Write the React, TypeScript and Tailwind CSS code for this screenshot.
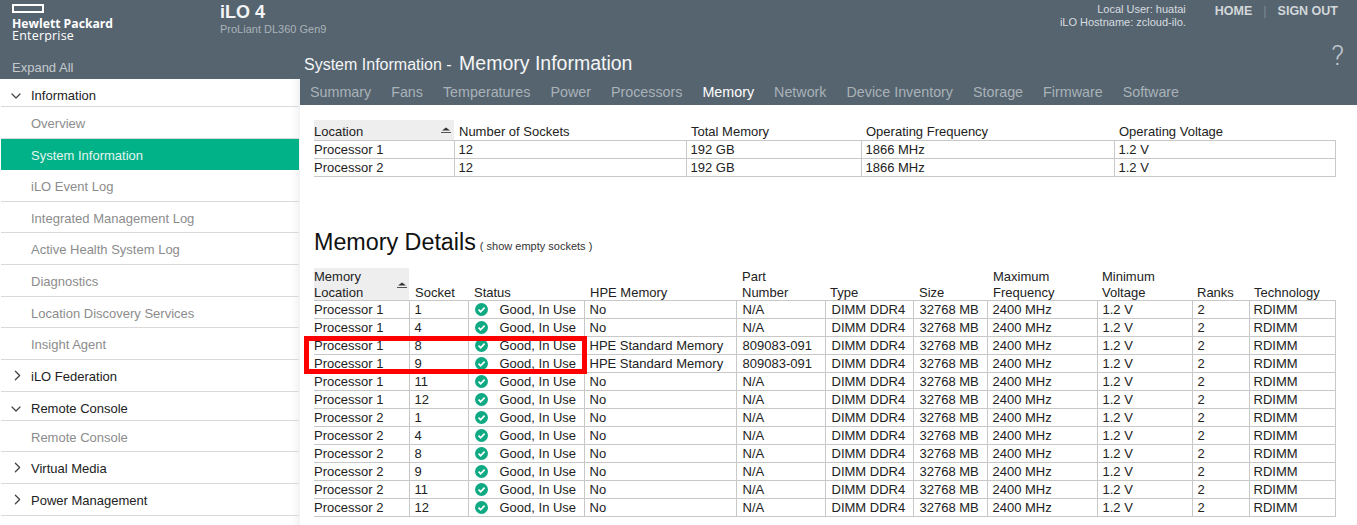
import { ChevronDown, ChevronRight } from 'lucide-react';

const TABS = ['Summary', 'Fans', 'Temperatures', 'Power', 'Processors', 'Memory', 'Network', 'Device Inventory', 'Storage', 'Firmware', 'Software'];

const SUMMARY_COLS = [140, 232, 175, 253, 221];
const DETAIL_COLS = [95, 59, 116, 152, 89, 88, 74, 110, 95, 57, 86];

const SOCKETS = [
  ['Processor 1', '1'], ['Processor 1', '4'], ['Processor 1', '8'], ['Processor 1', '9'], ['Processor 1', '11'], ['Processor 1', '12'],
  ['Processor 2', '1'], ['Processor 2', '4'], ['Processor 2', '8'], ['Processor 2', '9'], ['Processor 2', '11'], ['Processor 2', '12'],
];

function SortArrow() {
  return (
    <svg width="10" height="6" viewBox="0 0 10 6" className="absolute right-[3px] top-[7px]">
      <path d="M1 3.5 5 .5l4 3z" fill="#333" />
      <path d="M0 5.5h10" stroke="#555" strokeWidth="1" />
    </svg>
  );
}

function NavHeader({ label, open, className }: { label: string; open?: boolean; className: string }) {
  return (
    <div className={`flex items-center border-b border-[#d9d9d9] text-[13px] text-[#222] ${className}`}>
      <span className="w-[30px] shrink-0">
        {open
          ? <ChevronDown size={16} strokeWidth={1.8} className="ml-[7px] text-[#444]" />
          : <ChevronRight size={17} strokeWidth={1.8} className="mb-[2px] ml-[8px] text-[#444]" />}
      </span>
      <span>{label}</span>
    </div>
  );
}

function NavItem({ label, active }: { label: string; active?: boolean }) {
  return (
    <div className={`flex h-[31.6px] items-center border-b pl-[30px] pt-[3px] text-[13px] ${active ? 'border-transparent bg-[#01b188] text-[#e4f5ef]' : 'border-[#d9d9d9] text-[#8c8c8c]'}`}>
      {label}
    </div>
  );
}

function GoodIcon() {
  return (
    <svg width="13" height="13" viewBox="0 0 14 14" className="ml-[1px] shrink-0">
      <circle cx="7" cy="7" r="7" fill="#0fa984" />
      <path d="M3.8 7.2 6.1 9.4 10.3 5" fill="none" stroke="#fff" strokeWidth="1.8" />
    </svg>
  );
}

function SummaryTable() {
  return (
    <table className="table-fixed border-collapse text-[13px] leading-[15px] text-[#222]">
      <colgroup>
        {SUMMARY_COLS.map((w, i) => <col key={i} style={{ width: w }} />)}
      </colgroup>
      <thead>
        <tr className="h-[20px] border-b border-[#c8c8c8] text-left align-bottom">
          {['Location', 'Number of Sockets', 'Total Memory', 'Operating Frequency', 'Operating Voltage'].map((h, i) => (
            <th key={h} className={`relative p-0 pb-[1px] font-normal ${i === 0 ? 'bg-[#eeeeee]' : 'pl-[5px]'}`}>
              {h}
              {i === 0 && <SortArrow />}
            </th>
          ))}
        </tr>
      </thead>
      <tbody>
        {['Processor 1', 'Processor 2'].map(p => (
          <tr key={p} className="h-[18px] border-b border-[#c8c8c8]">
            <td className="p-0">{p}</td>
            {['12', '192 GB', '1866 MHz', '1.2 V'].map((v, i) => (
              <td key={i} className={`border-l border-[#c8c8c8] p-0 pl-[4px] ${i === 3 ? 'border-r' : ''}`}>{v}</td>
            ))}
          </tr>
        ))}
      </tbody>
    </table>
  );
}

function DetailsTable() {
  const heads = [
    { label: 'Memory Location', cls: 'bg-[#eeeeee] pr-[30px]' },
    { label: 'Socket', cls: 'pl-[6px]' },
    { label: 'Status', cls: 'pl-[6px]' },
    { label: 'HPE Memory', cls: 'pl-[6px]' },
    { label: 'Part Number', cls: 'pl-[6px] pr-[20px]' },
    { label: 'Type', cls: 'pl-[5px]' },
    { label: 'Size', cls: 'pl-[6px]' },
    { label: 'Maximum Frequency', cls: 'pl-[6px] pr-[20px]' },
    { label: 'Minimum Voltage', cls: 'pl-[5px] pr-[20px]' },
    { label: 'Ranks', cls: 'pl-[5px]' },
    { label: 'Technology', cls: 'pl-[5px]' },
  ];
  return (
    <table className="table-fixed border-collapse text-[13px] leading-[15px] text-[#222]">
      <colgroup>
        {DETAIL_COLS.map((w, i) => <col key={i} style={{ width: w }} />)}
      </colgroup>
      <thead>
        <tr className="h-[32px] border-b border-[#c8c8c8] text-left align-bottom">
          {heads.map((h, i) => (
            <th key={h.label} className={`relative p-0 font-normal leading-[16px] ${h.cls}`}>
              <span className="relative top-[1px] block">{h.label}</span>
              {i === 0 && <span className="absolute right-[-1px] top-[7px] h-[7px] w-[13px]"><SortArrow /></span>}
            </th>
          ))}
        </tr>
      </thead>
      <tbody>
        {SOCKETS.map(([proc, socket], r) => {
          const std = r === 2 || r === 3;
          return (
            <tr key={r} className="h-[18px] border-b border-[#c8c8c8]">
              <td className="p-0">{proc}</td>
              <td className="border-l border-[#c8c8c8] p-0 pl-[5px]">{socket}</td>
              <td className="border-l border-[#c8c8c8] p-0 pl-[5px]">
                <span className="flex items-center gap-[12px]"><GoodIcon /><span>Good, In Use</span></span>
              </td>
              <td className="border-l border-[#c8c8c8] p-0 pl-[5px]">{std ? 'HPE Standard Memory' : 'No'}</td>
              <td className="border-l border-[#c8c8c8] p-0 pl-[6px]">{std ? '809083-091' : 'N/A'}</td>
              <td className="border-l border-[#c8c8c8] p-0 pl-[6px]">DIMM DDR4</td>
              <td className="border-l border-[#c8c8c8] p-0 pl-[6px]">32768 MB</td>
              {['2400 MHz', '1.2 V', '2'].map((v, i) => (
                <td key={i} className="border-l border-[#c8c8c8] p-0 pl-[5px]">{v}</td>
              ))}
              <td className="border-x border-[#c8c8c8] p-0 pl-[4px]">RDIMM</td>
            </tr>
          );
        })}
      </tbody>
    </table>
  );
}

export default function App() {
  return (
    <div className="relative h-[525px] w-[1357px] overflow-hidden bg-white font-['Liberation_Sans',Arial,sans-serif]">
      <header className="flex h-[42px] bg-[#56646f]">
        <div className="w-[220px] pl-[12px] pt-[4px] text-white">
          <div className="h-[9px] w-[32px] border-2 border-white" />
          <div className="mt-[4px] font-['Open_Sans',sans-serif] text-[12.2px] font-bold leading-[13px]">Hewlett Packard</div>
          <div className="font-['Open_Sans',sans-serif] text-[12.5px] leading-[12px] tracking-[0.2px]">Enterprise</div>
        </div>
        <div className="pt-[2px]">
          <div className="text-[18px] font-bold leading-[21px] text-[#f2f4f5]">iLO 4</div>
          <div className="text-[11px] leading-[12px] text-[#a9b2b8]">ProLiant DL360 Gen9</div>
        </div>
        <div className="ml-auto flex pr-[19px] pt-[3px]">
          <div className="mr-[29px] text-right text-[11px] leading-[13px] text-[#d8dde0]">
            <div>Local User: huatai</div>
            <div>iLO Hostname: zcloud-ilo.</div>
          </div>
          <div className="mt-[1px] flex items-start gap-[11px] text-[12.5px] font-bold leading-[15px] text-[#d2d7da]">
            <span>HOME</span>
            <span className="font-normal text-[#7f8b94]">|</span>
            <span>SIGN OUT</span>
          </div>
        </div>
      </header>

      <div className="flex">
        <aside className="z-10 h-[483px] w-[300px] shrink-0 shadow-[inset_-10px_0_10px_-8px_rgba(0,0,0,0.08)]">
          <div className="flex h-[37px] items-end bg-[#56646f] pb-[2px] pl-[12px] text-[13px] text-[#c4cacd]">Expand All</div>
          <div className="pl-[1px] pr-[1px]">
            <NavHeader label="Information" open className="h-[28px] pt-[6px]" />
            <NavItem label="Overview" />
            <NavItem label="System Information" active />
            <NavItem label="iLO Event Log" />
            <NavItem label="Integrated Management Log" />
            <NavItem label="Active Health System Log" />
            <NavItem label="Diagnostics" />
            <NavItem label="Location Discovery Services" />
            <NavItem label="Insight Agent" />
            <NavHeader label="iLO Federation" className="h-[32px] pt-[2px]" />
            <NavHeader label="Remote Console" open className="h-[29px] pt-[6px]" />
            <NavItem label="Remote Console" />
            <NavHeader label="Virtual Media" className="h-[32px] pt-[1px]" />
            <NavHeader label="Power Management" className="h-[32px] pt-[1px]" />
          </div>
        </aside>

        <main className="min-w-0 flex-1">
          <div className="relative h-[63px] bg-[#56646f]">
            <div className="flex items-baseline pl-[4px] pt-[9px] text-[#f4f6f7]">
              <span className="pr-[3px] text-[16px] leading-[24px]">System Information -&nbsp;</span>
              <span className="text-[19.5px] leading-[24px]">Memory Information</span>
            </div>
            <span className="absolute right-[13px] top-[-2px] font-['Roboto',sans-serif] text-[28px] font-light leading-[32px] text-[#c0c6ca]">?</span>
            <nav className="mt-[5px] flex gap-[20px] pl-[10px] text-[14.3px] leading-[20px] text-[#a9b2b8]">
              {TABS.map(t => (
                <span key={t} className={t === 'Memory' ? 'text-white' : ''}>{t}</span>
              ))}
            </nav>
          </div>

          <div className="pl-[14px] pt-[15px]">
            <SummaryTable />
            <div className="mt-[49px] flex items-baseline gap-[4px] text-[#111]">
              <h2 className="text-[23.3px] leading-[32px]">Memory Details</h2>
              <span className="text-[11px] text-[#333]">( show empty sockets )</span>
            </div>
            <div className="mt-[10px]">
              <DetailsTable />
            </div>
          </div>
        </main>
      </div>

      {/* red highlight drawn over the two standard memory rows */}
      <div className="absolute left-[304px] top-[336px] h-[38px] w-[283px] border-[5px] border-[#f00]" />
    </div>
  );
}
